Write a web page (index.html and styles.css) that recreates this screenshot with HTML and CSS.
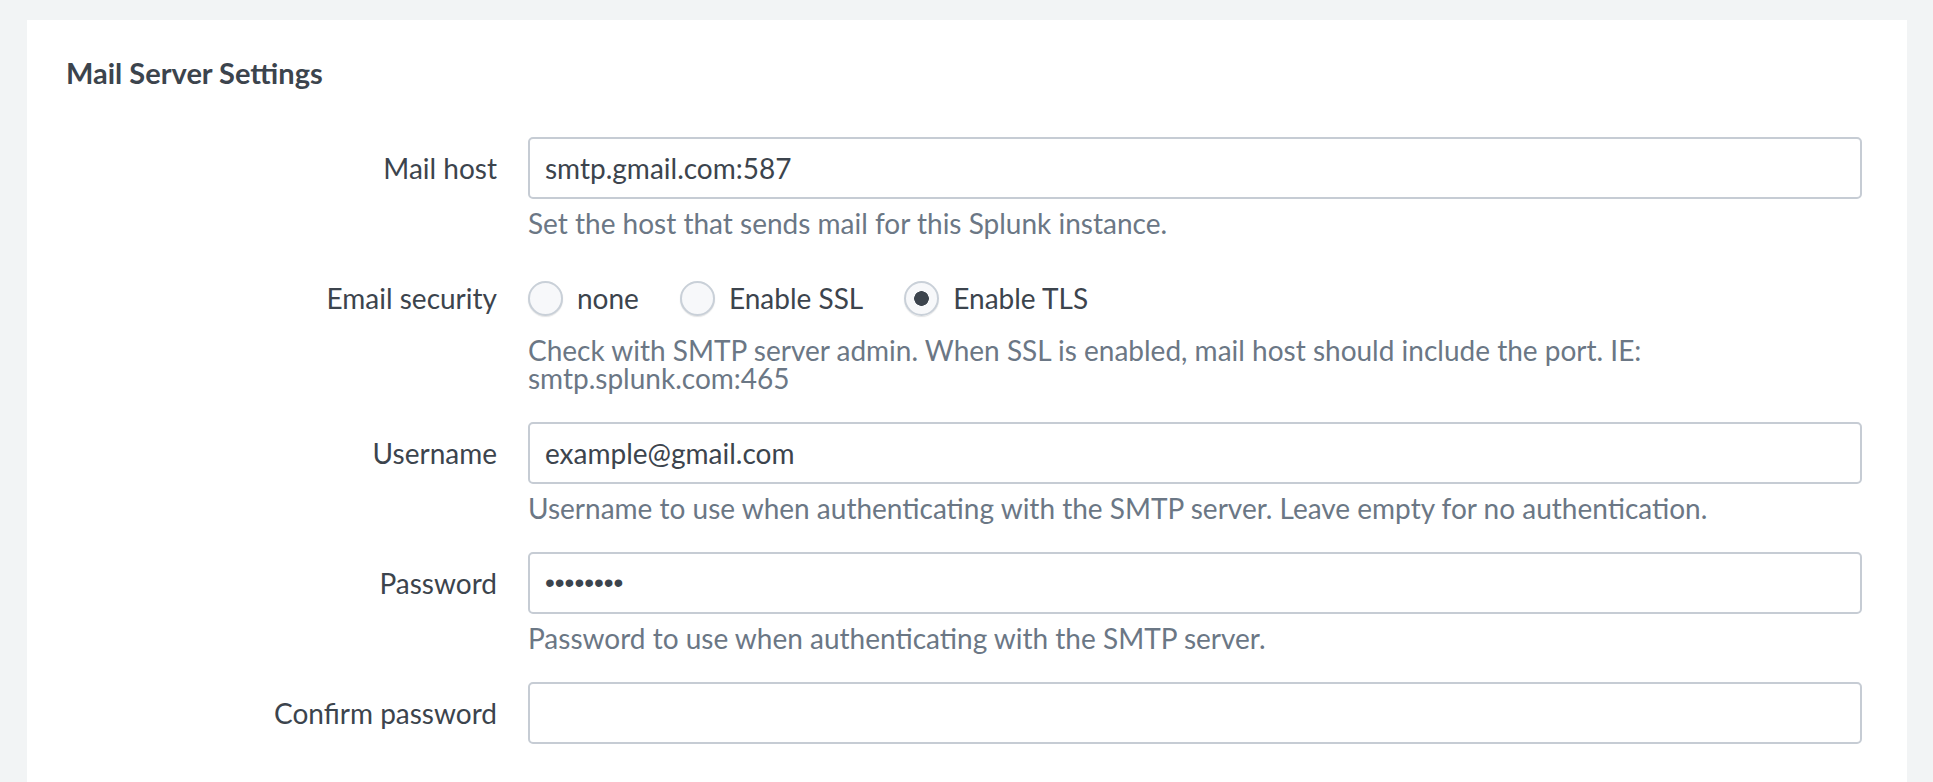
FILE: index.html
```html
<!DOCTYPE html>
<html lang="en">
<head>
<meta charset="utf-8">
<title>Mail Server Settings</title>
<link rel="stylesheet" href="styles.css">
</head>
<body>
<div class="panel">
  <h2 class="title">Mail Server Settings</h2>
  <div class="form">
    <div class="row">
      <label class="label" for="host">Mail host</label>
      <div class="control">
        <input id="host" class="text" type="text" value="smtp.gmail.com:587">
        <div class="help">Set the host that sends mail for this Splunk instance.</div>
      </div>
    </div>
    <div class="row">
      <div class="label">Email security</div>
      <div class="control">
        <div class="radios">
          <label class="radio"><input class="radio-input" type="radio" name="sec"><span>none</span></label>
          <label class="radio"><input class="radio-input" type="radio" name="sec"><span>Enable SSL</span></label>
          <label class="radio"><input class="radio-input" type="radio" name="sec" checked><span>Enable TLS</span></label>
        </div>
        <div class="help help-radio">Check with SMTP server admin. When SSL is enabled, mail host should include the port. IE: smtp.splunk.com:465</div>
      </div>
    </div>
    <div class="row">
      <label class="label" for="user">Username</label>
      <div class="control">
        <input id="user" class="text" type="text" value="example@gmail.com">
        <div class="help">Username to use when authenticating with the SMTP server. Leave empty for no authentication.</div>
      </div>
    </div>
    <div class="row">
      <label class="label" for="pass">Password</label>
      <div class="control">
        <input id="pass" class="text password" type="password" value="12345678">
        <div class="help">Password to use when authenticating with the SMTP server.</div>
      </div>
    </div>
    <div class="row">
      <label class="label" for="confirm">Confirm password</label>
      <div class="control">
        <input id="confirm" class="text password" type="password" value="">
      </div>
    </div>
  </div>
</div>
</body>
</html>
```

FILE: styles.css
```css
html, body {
  margin: 0;
  padding: 0;
  background: #f2f4f5;
  font-family: Lato, "Liberation Sans", sans-serif;
  color: #3c444d;
  overflow: hidden;
}

.panel {
  margin: 20px 26px 0 27px;
  background: #ffffff;
  padding: 38px 45px 60px 39px;
  min-height: 800px;
}

.title {
  margin: 0 0 49px 0;
  font-size: 29px;
  line-height: 30px;
  font-weight: 700;
  color: #3c444d;
}

.form {
  display: flex;
  flex-direction: column;
  gap: 30px;
}

.row {
  display: grid;
  grid-template-columns: 431px 1fr;
  column-gap: 31px;
}

.label {
  text-align: right;
  font-size: 28px;
  line-height: 62px;
  color: #3c444d;
}

.control {
  display: flex;
  flex-direction: column;
}

.text {
  box-sizing: border-box;
  width: 100%;
  height: 62px;
  margin: 0;
  padding: 0 15px;
  border: 2px solid #c6ccd4;
  border-radius: 5px;
  background: #ffffff;
  font-family: Lato, "Liberation Sans", sans-serif;
  font-size: 28px;
  color: #3c444d;
  outline: none;
}

.password {
  font-family: "Liberation Sans", sans-serif;
  font-size: 28px;
  letter-spacing: 0;
}

.help {
  margin-top: 10px;
  font-size: 28px;
  line-height: 28px;
  color: #6b7785;
}

.help-radio {
  margin-top: 7px;
}

.radios {
  height: 62px;
  display: flex;
  align-items: center;
  gap: 41px;
}

.radio {
  display: flex;
  align-items: center;
  gap: 14px;
  font-size: 28px;
  color: #3c444d;
}

.radio-input {
  -webkit-appearance: none;
  appearance: none;
  box-sizing: border-box;
  width: 35px;
  height: 35px;
  margin: 0;
  border: 2px solid #c9d0d8;
  border-radius: 50%;
  background: #f7f8fa;
  box-shadow: 0 1px 1px rgba(60, 68, 77, 0.15);
}

.radio-input:checked {
  background: radial-gradient(circle, #3c444d 0 7px, #f7f8fa 7.6px);
}
```
